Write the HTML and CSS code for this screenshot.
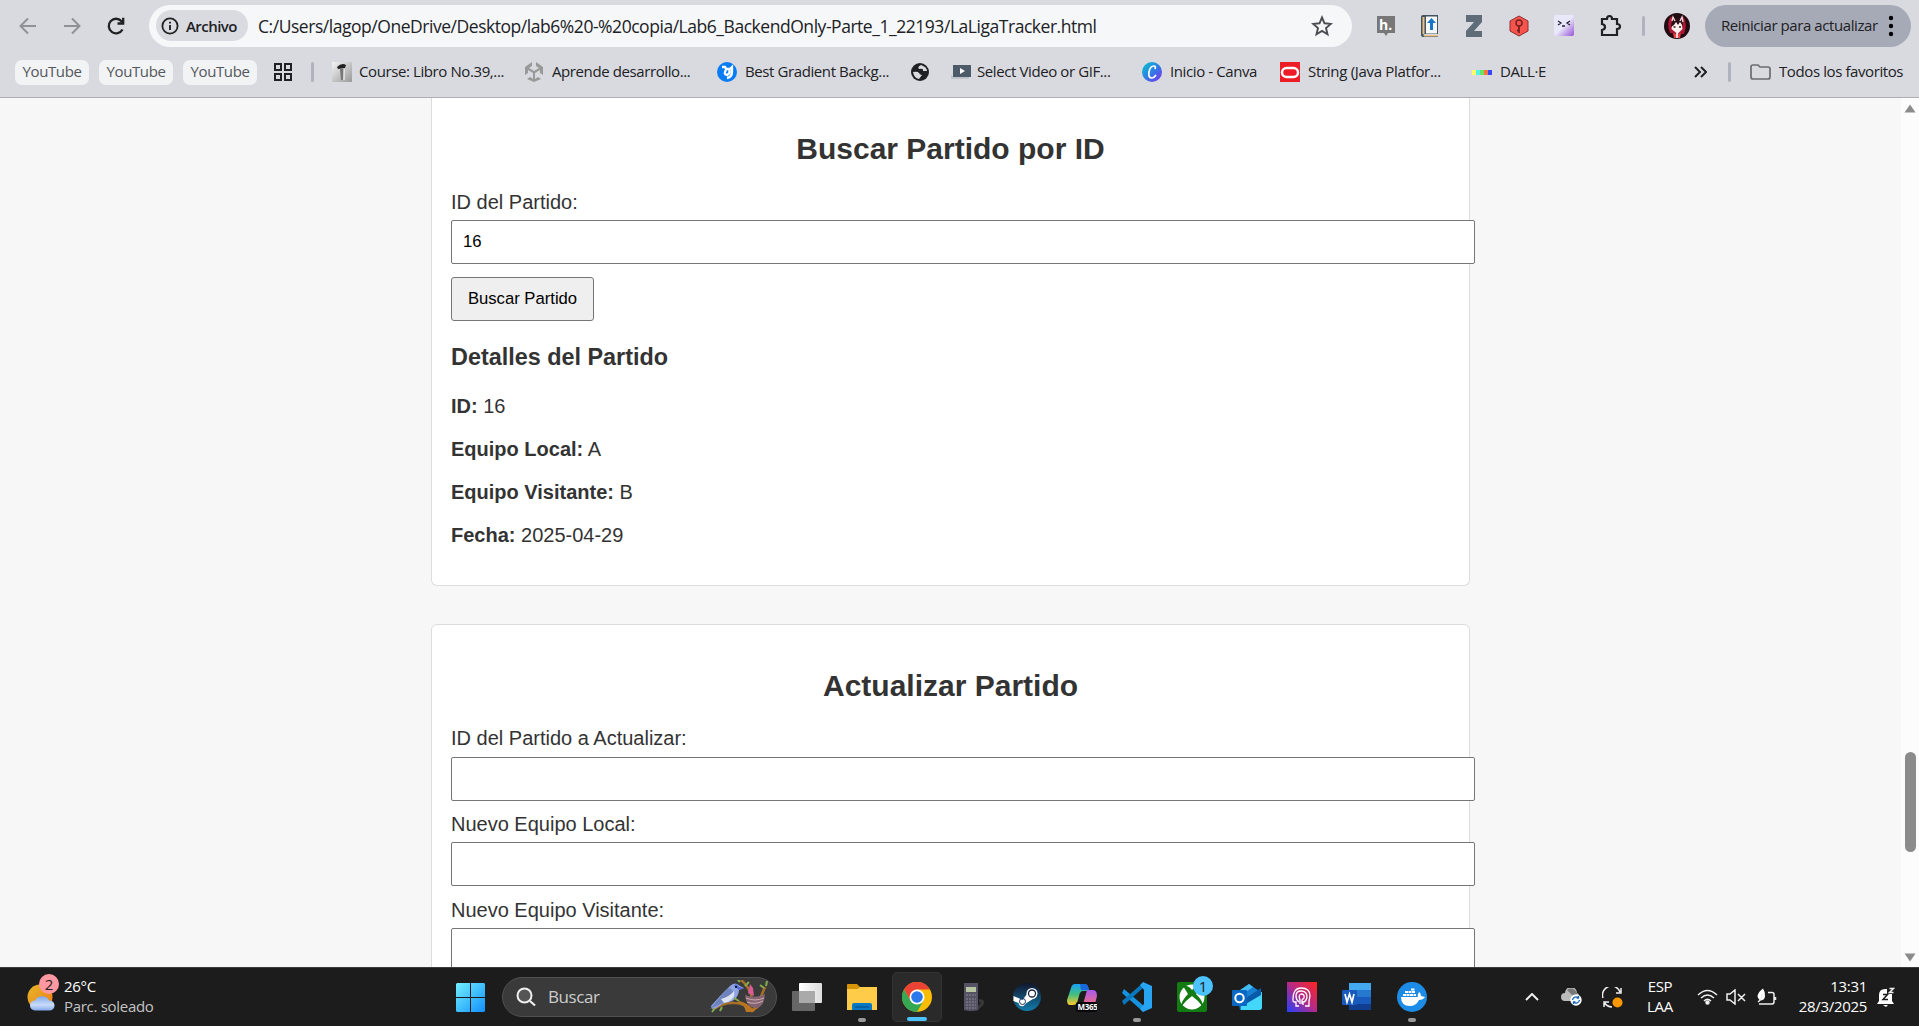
FILE: index.html
```html
<!DOCTYPE html>
<html lang="es">
<head>
<meta charset="utf-8">
<title>LaLigaTracker</title>
<link rel="stylesheet" href="styles.css">
</head>
<body>
<header class="browser">
  <div class="toolbar">
    <svg class="nav back" width="24" height="24" viewBox="0 0 24 24"><path d="M20 12H5M12 4.500L4.500 12l7.500 7.500"/></svg>
    <svg class="nav fwd" width="24" height="24" viewBox="0 0 24 24"><path d="M4 12h15M12 4.500L19.500 12 12 19.500"/></svg>
    <svg class="nav reload" width="24" height="24" viewBox="0 0 24 24"><path d="M18.500 15.500A7.300 7.300 0 1 1 17.800 7.500L19 9M19.200 3.800V9.500H13.500"/></svg>
    <div class="omnibox">
      <div class="chip">
        <svg width="18" height="18" viewBox="0 0 18 18"><circle cx="9" cy="9" r="7.600" fill="none" stroke="#222" stroke-width="1.800"/><path d="M9 8v5M9 4.700v1.900" stroke="#222" stroke-width="1.900"/></svg>
        <span class="chip-text">Archivo</span>
      </div>
      <span class="url">C:/Users/lagop/OneDrive/Desktop/lab6%20-%20copia/Lab6_BackendOnly-Parte_1_22193/LaLigaTracker.html</span>
      <svg class="star" width="22" height="22" viewBox="0 0 22 22"><path d="M11 2.500l2.500 5.800 6.300.6-4.800 4.100 1.500 6.200L11 15.900l-5.500 3.300L7 13 2.200 8.900l6.300-.6z" fill="none" stroke="#4a4d51" stroke-width="1.900"/></svg>
    </div>
    <div class="extensions">
      <svg width="20" height="20" viewBox="0 0 20 20"><path d="M1 0h18v17h-7l-2 3-2-3H1z" fill="#777"/><text x="3" y="14" class="h-letter">h.</text></svg>
      <svg width="20" height="22" viewBox="0 0 20 22"><path d="M1 2q0-2 2-2h15v19H5q-2 0-2 1.500H18V22H3q-2 0-2-2z" fill="#44535d"/><path d="M2.500 2h2v17h-2z" fill="#e9c384"/><path d="M6 1.500h11v17H6z" fill="#f5f7f8"/><path d="M4 20h14v1.500H4z" fill="#e9c384"/><path d="M11.500 3L16 8h-3v7h-3V8H7z" fill="#1675c9"/></svg>
      <svg width="20" height="22" viewBox="0 0 20 22"><path d="M2 0h16v7l-8 9h8v6H2v-6l8-9H2z" fill="#5e6d78"/></svg>
      <svg width="22" height="22" viewBox="0 0 22 22"><path d="M11 1l9 5v10l-9 5-9-5V6z" fill="#f7544e" stroke="#8e2e2d"/><circle cx="11" cy="8" r="3" fill="none" stroke="#722" stroke-width="1.500"/><path d="M11 11v7m0-2.500h-2" stroke="#722" stroke-width="1.800"/></svg>
      <svg width="20" height="21" viewBox="0 0 20 21"><defs><linearGradient id="face" x1="0" y1="0" x2="1" y2="1"><stop offset=".5" stop-color="#e9e8fa"/><stop offset="1" stop-color="#9651d6"/></linearGradient></defs><rect width="20" height="21" rx="2" fill="url(#face)"/><path d="M4 6l3 2-3 2m12-4l-3 2 3 2M8 11h3" fill="none" stroke="#223" stroke-width="1.300"/></svg>
      <svg width="24" height="24" viewBox="0 0 24 24"><path d="M4 5h5q0-3 2.500-3T14 5h5v5q3 0 3 2.500T19 15v6H4v-5q3-.5 3-3T4 10z" fill="none" stroke="#202124" stroke-width="2.200"/></svg>
    </div>
    <i class="bar-rule"></i>
    <svg class="avatar" width="26" height="26" viewBox="0 0 26 26"><circle cx="13" cy="13" r="13" fill="#210c13"/><path d="M6 20Q2 10 7 3l2 5h8l2-5q5 8 1 18z" fill="#b01734"/><path d="M8.500 9h9l1 7-5 5-6-5z" fill="#fff0ed"/><path d="M7 14Q7 5 13 5t6 8l-3-4-2 3-2-3-2 3z" fill="#2b1018"/><path d="M8 8l1-4 2 4m5 0l2-4 1 5" stroke="#f4d9dd" stroke-width="1.300" fill="none"/><path d="M9.500 14h2m3.500 0h2" stroke="#391820" stroke-width="1.500"/><path d="M9 20l4 1 4-1-1 5h-6z" fill="#ee4344"/><path d="M13 20v5" stroke="#fff" stroke-width="1.500"/></svg>
    <div class="update"><span class="update-text">Reiniciar para actualizar</span><svg width="6" height="22" viewBox="0 0 6 22"><circle cx="3" cy="3" r="2.200"/><circle cx="3" cy="11" r="2.200"/><circle cx="3" cy="19" r="2.200"/></svg></div>
  </div>
  <nav class="bookmarks">
    <span class="yt">YouTube</span><span class="yt">YouTube</span><span class="yt">YouTube</span>
    <svg class="grid" width="18" height="18" viewBox="0 0 18 18"><path d="M1 1h6v6H1zM11 1h6v6h-6zM1 11h6v6H1zM11 11h6v6h-6z" fill="none" stroke="#202124" stroke-width="2"/></svg>
    <i class="bar-rule bm-rule"></i>
    <a class="bm b1"><svg width="20" height="20" viewBox="0 0 20 20"><defs><linearGradient id="book" x2="1" y2="1"><stop stop-color="#f4f4f4"/><stop offset="1" stop-color="#999"/></linearGradient></defs><path d="M0 0h20v20H0z" fill="url(#book)"/><path d="M5 5q5-5 9-2l-1 3-7 1z" fill="#222"/><path d="M8 7h4l-1 11H9z" fill="#777"/><path d="M12 7v11" stroke="#fff"/></svg><span>Course: Libro No.39,...</span></a>
    <a class="bm b2"><svg width="20" height="20" viewBox="0 0 20 20"><path d="M8 0v4L5 6l5 3 5-3-3-2V0l7 5v8l-3-2V8l-5 3v6l3-2 3 2-7 3-7-3 3-2 3 2v-6L4 8v3l-3 2V5z" fill="#999"/></svg><span>Aprende desarrollo...</span></a>
    <a class="bm b3"><svg width="20" height="20" viewBox="0 0 20 20"><circle cx="10" cy="10" r="10" fill="#087cf5"/><path d="M5 5h3l1 2h4l2-2v5q0 5-5 6m-1-8q-3 4 1 5 4-2 2-5" fill="none" stroke="#fff" stroke-width="2.300"/></svg><span>Best Gradient Backg...</span></a>
    <a class="bm b4"><svg width="18" height="18" viewBox="0 0 18 18"><circle cx="9" cy="9" r="9" fill="#202124"/><path d="M2 9q5-1 6 1t3 2l-3 4q-5-1-6-7m8-7q-4 2-2 4 5-1 4 2l4 0Q16 4 10 2" fill="#dadbe0"/></svg></a>
    <a class="bm b5"><svg width="20" height="16" viewBox="0 0 20 16"><path d="M0 11l3 2h15v2H0z" fill="#c0c3c9"/><rect x="2" y="1" width="18" height="12" fill="#4c5b67"/><path d="M9 4l5 3-5 3z" fill="#fff"/></svg><span>Select Video or GIF...</span></a>
    <a class="bm b6"><svg width="20" height="20" viewBox="0 0 20 20"><defs><linearGradient id="canva" x2="1" y2="1"><stop stop-color="#00c9c8"/><stop offset=".55" stop-color="#3577e8"/><stop offset="1" stop-color="#842be8"/></linearGradient></defs><circle cx="10" cy="10" r="10" fill="url(#canva)"/><path d="M13 7q1-3-1-3-4 0-5 6-1 6 3 6 2 0 4-3" fill="none" stroke="#fff" stroke-width="1.700"/></svg><span>Inicio - Canva</span></a>
    <a class="bm b7"><svg width="20" height="20" viewBox="0 0 20 20"><path d="M0 0h20v20H0z" fill="#ee1c24"/><rect x="2" y="6" width="16" height="9" rx="4.500" fill="none" stroke="#fff" stroke-width="2.500"/></svg><span>String (Java Platfor...</span></a>
    <a class="bm b8"><svg width="20" height="5" viewBox="0 0 20 5"><path d="M0 0h4v5H0z" fill="#fffb6a"/><path d="M4 0h4v5H4z" fill="#51f3e8"/><path d="M8 0h4v5H8z" fill="#6be35c"/><path d="M12 0h4v5h-4z" fill="#f27542"/><path d="M16 0h4v5h-4z" fill="#3646ff"/></svg><span>DALL·E</span></a>
    <svg class="more" width="13" height="12" viewBox="0 0 13 12"><path d="M1 1l5 5-5 5M7 1l5 5-5 5" fill="none" stroke="#202124" stroke-width="2"/></svg>
    <i class="bar-rule fav-rule"></i>
    <a class="bm b9"><svg width="21" height="16" viewBox="0 0 21 16"><path d="M1 3q0-2 2-2h5l2 2h8q2 0 2 2v8q0 2-2 2H3q-2 0-2-2z" fill="none" stroke="#6b6c70" stroke-width="1.700"/></svg><span>Todos los favoritos</span></a>
  </nav>
</header>
<main class="viewport">
  <div class="page">
    <section class="card first">
      <h2>Buscar Partido por ID</h2>
      <label>ID del Partido:</label>
      <input value="16">
      <button>Buscar Partido</button>
      <h3>Detalles del Partido</h3>
      <p><strong>ID:</strong> 16</p>
      <p><strong>Equipo Local:</strong> A</p>
      <p><strong>Equipo Visitante:</strong> B</p>
      <p><strong>Fecha:</strong> 2025-04-29</p>
    </section>
    <section class="card second">
      <h2>Actualizar Partido</h2>
      <label>ID del Partido a Actualizar:</label><input>
      <label>Nuevo Equipo Local:</label><input>
      <label>Nuevo Equipo Visitante:</label><input>
    </section>
  </div>
  <aside class="scroll"><svg width="12" height="9" viewBox="0 0 12 9"><path d="M6 0.500l5.500 8H.5z"/></svg><i class="thumb"></i><svg class="down" width="12" height="9" viewBox="0 0 12 9"><path d="M6 8.500L.5.500h11z"/></svg></aside>
</main>
<footer class="taskbar">
  <div class="weather">
    <svg width="32" height="38" viewBox="0 0 32 38"><defs><linearGradient id="sun" y2="1" x2="1"><stop stop-color="#e5b927"/><stop offset="1" stop-color="#f27819"/></linearGradient><linearGradient id="cloud" x2="0" y2="1"><stop stop-color="#82a8e9"/><stop offset=".6" stop-color="#c9dcfa"/><stop offset="1" stop-color="#86a9eb"/></linearGradient></defs><circle cx="13" cy="23" r="12.500" fill="url(#sun)"/><path d="M8 36.500a5 5 0 0 1 0-10 8 8 0 0 1 14 0 5 5 0 0 1 1 10z" fill="url(#cloud)"/><circle cx="22" cy="10" r="10" fill="#ff98a0"/><text x="22" y="15.500" text-anchor="middle" class="badge-text">2</text></svg>
    <div class="weather-text"><span>26°C</span><span class="muted">Parc. soleado</span></div>
  </div>
  <svg class="start" width="29" height="29" viewBox="0 0 29 29"><defs><linearGradient id="win" x2="1" y2="1"><stop stop-color="#72efff"/><stop offset="1" stop-color="#1290fb"/></linearGradient></defs><path d="M1 0h13v14H0V1zM15 0h13l1 1v13H15zM0 15h14v14H1l-1-1zM15 15h14v13l-1 1H15z" fill="url(#win)"/></svg>
  <div class="search">
    <svg width="20" height="20" viewBox="0 0 20 20"><circle cx="8.500" cy="8.500" r="7" fill="#555" stroke="#eee" stroke-width="2"/><path d="M14 14l5 4.500" stroke="#eee" stroke-width="2.200"/></svg>
    <span>Buscar</span>
    <svg class="bird" width="60" height="34" viewBox="0 0 60 34"><path d="M4 29q10-7 21-6 10 0 17 8 6-6 13-24M48 28q-5-5-6-10Q39 6 31 0" fill="none" stroke="#a66f28" stroke-width="2.500"/><path d="M27 23q7 0 9 9h7l7-6-7 3q-7-7-14-8" fill="#b87522"/><path d="M1 26l10-11L20 6q5-5 10 0l4 2-5 2q-1 12-15 13L3 30z" fill="#8fa5e3"/><path d="M20 8q-5 1-9 8L0 29l17-8q7-4 6-10" fill="#6f83bd"/><path d="M11 19q8-2 13-8 2 9-10 12z" fill="#dce3f2"/><path d="M24 6q2-4 5 1l5 1-5 2z" fill="#5668d8"/><circle cx="26" cy="7" r="1"/><path d="M35 15q10 4 20-1-1 14-10 14-9-1-10-13" fill="#846473"/><path d="M36 18q9 4 18 0m-17 4q8 3 16-1" fill="none" stroke="#cfadae"/><path d="M38 13l2-9 3 4 1 8z" fill="#db5a93"/><path d="M30 2l-2-2m7 6l4-4m15 6l-4-3m6 1l1-5M5 28l-3 4m10-5l-2 4m19-10l-5-3" stroke="#83ad4c" stroke-width="2"/></svg>
  </div>
  <div class="apps">
    <div class="app"><svg width="30" height="30" viewBox="0 0 30 30"><defs><linearGradient id="glass"><stop stop-color="#fff"/><stop offset="1" stop-color="#ddd"/></linearGradient></defs><rect x="7" y="1" width="23" height="20" rx="1" fill="url(#glass)"/><rect y="9" width="23" height="20" rx="1" fill="#666"/><path d="M7 9h16v12H7z" fill="#aaa"/></svg></div>
    <div class="app"><svg width="30" height="30" viewBox="0 0 30 30"><path d="M0 3q0-1 1-1h9l3 3h16v8H0z" fill="#d89409"/><path d="M0 7h11l2-2h17v23H0z" fill="#ffcc4a"/><path d="M5 28v-5q0-2 2-2h16q2 0 2 2v5z" fill="#0878c4"/><path d="M8 25h14" stroke="#034a80"/></svg><i class="dot"></i></div>
    <div class="app active"><svg width="30" height="30" viewBox="0 0 30 30"><circle cx="15" cy="15" r="15" fill="#fbbc05"/><path d="M2 7.500A15 15 0 0 1 28 7.500H15L8.500 19z" fill="#ea4335"/><path d="M2 7.500l6.500 11.300 6.500 3.700 6.500-3.800L15 30A15 15 0 0 1 2 7.500z" fill="#34a853"/><circle cx="15" cy="15" r="7.500" fill="#fff"/><circle cx="15" cy="15" r="5.800" fill="#2878ec"/></svg><i class="line"></i></div>
    <div class="app"><svg width="30" height="30" viewBox="0 0 30 30"><path d="M22 19q5-1 3 3l-6 6" fill="none" stroke="#393939" stroke-width="3"/><path d="M7 1h14v27q-7 2-14 0z" fill="#555363"/><path d="M9 5h10v5H9z" fill="#b8c5a2"/><path d="M9 13h10m-10 4h10m-10 3h10m-10 3h10m-10 3h10" stroke="#8c879b" stroke-dasharray="2 1"/></svg></div>
    <div class="app"><svg width="30" height="30" viewBox="0 0 30 30"><defs><linearGradient id="steam" x2="0" y2="1"><stop stop-color="#11162c"/><stop offset="1" stop-color="#137cac"/></linearGradient></defs><circle cx="15" cy="15" r="14" fill="url(#steam)"/><path d="M1.500 14l9 4 6-8 6 6-8 5-3 3q-4 1-5-3l-5-2z" fill="#fff"/><circle cx="20" cy="11.500" r="5.500" fill="#fff"/><circle cx="20" cy="11.500" r="3.500" fill="#fff" stroke="#17243d" stroke-width="1.300"/><circle cx="10.500" cy="19.500" r="3" fill="none" stroke="#17345d" stroke-width="1"/></svg></div>
    <div class="app"><svg width="30" height="30" viewBox="0 0 30 30"><defs><linearGradient id="cop" x2="0" y2="1"><stop stop-color="#15a2f7"/><stop offset=".5" stop-color="#44be7e"/><stop offset="1" stop-color="#ffc928"/></linearGradient><linearGradient id="pil" x2="0" y2="1"><stop stop-color="#a85aef"/><stop offset="1" stop-color="#ff716b"/></linearGradient></defs><path d="M8 2h10q3 0 4 7h-6q-3 0-4 5l-2 7q-1 2-4 2H3q-3 0-3-5L4 6q1-4 4-4z" fill="url(#cop)"/><path d="M13 2h5q3 0 4 6h-8z" fill="#1867db"/><path d="M20 8h6q4 0 4 6l-3 12H14q2 0 3-7z" fill="url(#pil)"/><rect x="9" y="20" width="21" height="10" rx="2" fill="#050505"/><text x="10.500" y="28" class="m365">M365</text></svg></div>
    <div class="app"><svg width="30" height="30" viewBox="0 0 30 30"><path d="M2 7l20 17-.5 6L0 11z" fill="#1693df"/><path d="M2 23L22 5V0L0 19z" fill="#0877bc"/><path d="M21 0l9 4v22l-9 4-3-3 4-5V8l-4-5z" fill="#27a4f2"/></svg><i class="dot"></i></div>
    <div class="app"><svg class="badged" width="36" height="36" viewBox="0 0 36 36"><rect x="0" y="6" width="30" height="30" rx="2" fill="#127b12"/><circle cx="15" cy="21" r="12.500" fill="#fff"/><path d="M6 10q5-1 9 4 5-5 9-4l-5 8q8 8 7 13-4-6-11-11Q8 25 4 31q0-6 7-13z" fill="#127b12"/><circle cx="26" cy="10" r="10" fill="#4cc2ff"/><text x="26" y="15.500" text-anchor="middle" class="badge-text">1</text></svg></div>
    <div class="app"><svg width="30" height="30" viewBox="0 0 30 30"><path d="M5 11L17 2l13 9v14q0 3-3 3H8z" fill="#1680d2"/><path d="M8 8l9-6 4 3-13 9z" fill="#45bbf4"/><path d="M9 21l12-9 9-2v15q0 3-3 3H9z" fill="#43d7fa"/><path d="M11 18L29 6v7l-17 10z" fill="#075ba9"/><rect y="8" width="15" height="16" rx="1" fill="#0868c3"/><circle cx="7.500" cy="16" r="4.200" fill="none" stroke="#fff" stroke-width="2"/></svg></div>
    <div class="app"><svg width="30" height="30" viewBox="0 0 30 30"><defs><linearGradient id="head" x1="0" y1="1" x2="1" y2="0"><stop stop-color="#2341ff"/><stop offset=".5" stop-color="#b52a88"/><stop offset="1" stop-color="#ff251d"/></linearGradient></defs><path d="M0 0h30v30H0z" fill="url(#head)"/><path d="M12 24H9v-4H7q-1 0-1-2 0-12 8-12 9 0 9 8l-1 5v5h-4M12 20q-3-2-3-6 0-5 5-5 6 0 6 6-1 5-4 5v3m-3-1v-4q-2-5 1-6 4 0 3 4l-2 2v4" fill="none" stroke="#fff" stroke-width="1.300"/></svg></div>
    <div class="app"><svg width="30" height="30" viewBox="0 0 30 30"><path d="M7 1h22v7H7z" fill="#43a8ed"/><path d="M7 8h22v7H7z" fill="#2579cf"/><path d="M7 15h22v7H7z" fill="#195bbd"/><path d="M7 22h22v6H7z" fill="#123e91"/><rect y="8" width="15" height="15" rx="1" fill="#1759bd"/><path d="M3 12l2 8 2.500-8 2.500 8 2-8" fill="none" stroke="#fff" stroke-width="1.700"/></svg></div>
    <div class="app"><svg width="30" height="30" viewBox="0 0 30 30"><circle cx="15" cy="15" r="15" fill="#1d8ce7"/><path d="M4 15h17q-1-2 1-5 2 1 2 4l4 1q-2 3-6 3-3 6-9 6-9 0-9-9z" fill="#fff"/><path d="M6 13h13M8 10h10M14 7.500h4" stroke="#fff" stroke-width="2.200" stroke-dasharray="3 .5"/></svg><i class="dot"></i></div>
  </div>
  <div class="tray">
    <svg class="chev" width="14" height="8" viewBox="0 0 14 8"><path d="M1 7l6-6 6 6"/></svg>
    <svg class="onedrive" width="21" height="18" viewBox="0 0 21 18"><path d="M4 13a4 4 0 0 1 0-8 6 6 0 0 1 12 0q3 1 2 8z" fill="#bbb"/><path d="M6 2q6-4 10 3l1 4-6-2z" fill="#777"/><circle cx="15" cy="12" r="5.700" fill="#fff"/><path d="M11.500 12a3.500 3.500 0 0 1 6-2m1 2a3.500 3.500 0 0 1-6 2m5-6v2h-2m-3 6v-2h2" fill="none" stroke="#1468bd" stroke-width="1.300"/></svg>
    <svg class="sync" width="21" height="21" viewBox="0 0 21 21"><path d="M1 11A9 9 0 0 1 18 5m1-4v5h-5M2 20v-5h5m-5 0q3 5 8 5"/><circle cx="15.500" cy="15.500" r="5" fill="#ff9800" stroke="none"/></svg>
    <div class="lang"><span>ESP</span><span>LAA</span></div>
    <svg class="wifi" width="21" height="16" viewBox="0 0 21 16"><path d="M1 6q9.500-9 19 0M4 9q6.500-6 13 0M7 12q3.500-3.500 7 0"/><circle cx="10.500" cy="13.500" r="1.500" fill="#fff"/></svg>
    <svg class="vol" width="20" height="16" viewBox="0 0 20 16"><path d="M1 5h3l5-4v14l-5-4H1zM12 5l7 7m0-7l-7 7"/></svg>
    <svg class="bat" width="21" height="18" viewBox="0 0 21 18"><path d="M12 4.500h4q2 0 2 2v7q0 2.500-2 2.500H3M19.500 9v3"/><path d="M7 .5q2 3 2 7 0 5-5 5-6-5 3-12z" fill="#fff" stroke="none"/><path d="M6 6q0 5-4 8"/></svg>
    <div class="clock"><span>13:31</span><span>28/3/2025</span></div>
    <svg class="bell" width="18" height="20" viewBox="0 0 18 20"><path d="M0 17l2-3V8q0-7 8-6v5h5v7l2 3zM6 18h5l-2 2z" fill="#fff" stroke="none"/><path d="M6 7.500h4.500l-4.500 5h5" stroke="#1c1c1c"/><path d="M12.500 1.500h4l-4 4h4"/></svg>
  </div>
</footer>
</body>
</html>
```
FILE: styles.css
```css
* { box-sizing: border-box; }
body { margin: 0; width: 1919px; height: 1026px; overflow: hidden; display: flex; flex-direction: column; font-family: "Open Sans", "Noto Sans", sans-serif; color: #202124; background: #f7f7f7; }
svg { flex: none; display: block; }
span { white-space: nowrap; }
.browser { height: 98px; background: #d9dadf; border-bottom: 1px solid #adaeb3; flex: none; }
.toolbar { height: 51px; display: flex; align-items: center; padding-left: 16px; }
.nav { fill: none; stroke: #909196; stroke-width: 2; margin-right: 20px; }
.nav.reload { stroke: #202124; stroke-width: 2.300; margin-right: 21px; }
.omnibox { width: 1203px; height: 42px; border-radius: 21px; background: #f5f7f9; display: flex; align-items: center; padding-left: 7px; flex: none; }
.chip { width: 92px; height: 31px; border-radius: 16px; background: #dadbe0; display: flex; align-items: center; padding-left: 5px; gap: 7px; font-size: 15px; font-weight: 600; }
.chip-text { letter-spacing: -.55px; }
.url { font-size: 17.500px; letter-spacing: -.46px; margin-left: 10px; width: 1053px; }
.extensions { display: flex; align-items: center; justify-content: space-between; width: 246px; margin-left: 24px; flex: none; }
.h-letter { font: bold 14px "Open Sans", sans-serif; fill: #fff; }
.bar-rule { width: 3px; height: 20px; background: #b0b3bd; border-radius: 2px; flex: none; }
.toolbar .bar-rule { margin-left: 20px; }
.avatar { margin-left: 19px; }
.update { width: 206px; height: 42px; border-radius: 21px; background: #a6aab6; margin-left: 15px; display: flex; align-items: center; padding-left: 16px; gap: 11px; flex: none; font-size: 15px; letter-spacing: -.42px; }
.update-text { width: 156px; margin-top: -2px; }
.bookmarks { height: 42px; display: flex; align-items: center; padding-left: 15px; font-size: 15px; letter-spacing: -.4px; }
.yt { width: 74px; height: 25px; border-radius: 7px; background: #f1f3f5; text-align: center; line-height: 23px; color: #54575b; margin-right: 10px; flex: none; }
.grid { margin-left: 7px; }
.bm-rule { margin: 0 18px 0 19px; }
.bm { display: flex; align-items: center; gap: 8px; flex: none; }
.bm span { margin-top: -2px; }
.b1 { width: 192px; gap: 7px; } .b2 { width: 193px; } .b3 { width: 194px; } .b4 { width: 40px; } .b5 { width: 191px; gap: 6px; } .b6 { width: 138px; } .b7 { width: 192px; } .b8 { width: 222px; }
.bm.b7 { letter-spacing: -.3px; }
.fav-rule { margin: 0 19px 0 21px; }
.viewport { height: 869px; flex: none; background: #f7f7f7; overflow: hidden; display: flex; justify-content: flex-end; font-family: "Liberation Sans", Arial, sans-serif; color: #333; }
.page { width: 1470px; display: flex; flex-direction: column; gap: 38px; }
.card { width: 1039px; background: #fff; border: 1px solid #ddd; border-radius: 6px; padding: 0 19px; flex: none; }
.card.first { height: 488px; border-top: 0; border-radius: 0 0 6px 6px; }
.card.second { height: 500px; }
h2 { margin: 0; font-size: 30px; line-height: 34px; text-align: center; }
.first h2 { padding-top: 34px; }
.second h2 { padding-top: 44px; }
label { display: block; font-size: 20px; line-height: 23px; }
.first label { margin-top: 25px; }
.second label { margin-top: 12px; }
.second h2 + label { margin-top: 24px; }
.second label:last-of-type { margin-top: 13px; }
input { display: block; width: 1024px; height: 44px; margin-top: 6px; border: 1px solid #767676; border-radius: 2px; padding: 0 11px; font: 16.667px "Liberation Sans", Arial, sans-serif; color: #000; background: #fff; }
.second h2 + label + input { margin-top: 7px; }
button { display: block; width: 143px; height: 44px; margin: 13px 0 0; border: 1px solid #767676; border-radius: 3px; background: #efefef; font: 16.667px "Liberation Sans", Arial, sans-serif; padding: 0; color: #000; }
h3 { font-size: 23.400px; line-height: 27px; margin: 23px 0 24px; }
p { font-size: 20px; line-height: 23px; margin: 0 0 20px; }
.scroll { width: 18px; background: #fcfcfc; display: flex; flex-direction: column; align-items: center; padding: 6px 0 5px; }
.scroll svg { fill: #8b8b8b; }
.thumb { width: 11px; height: 100px; border-radius: 6px; background: #8b8b8b; margin-top: 639px; }
.down { margin-top: auto; }
.taskbar { height: 59px; background: #1c1c1c; border-top: 1px solid #3b3b3b; display: flex; align-items: center; color: #fff; flex: none; font-size: 15px; letter-spacing: -.3px; }
.weather { display: flex; width: 456px; padding-left: 27px; gap: 5px; align-items: center; flex: none; }
.weather svg { margin-top: -8px; }
.weather-text, .lang, .clock { display: flex; flex-direction: column; line-height: 20px; margin-top: -2px; }
.muted { color: #c4c4c4; }
.badge-text { font: 15px "Open Sans", sans-serif; fill: #202020; }
.m365 { font: bold 8px "Open Sans", sans-serif; fill: #fff; }
.search { width: 275px; height: 40px; border-radius: 20px; background: #3a3a3a; border: 1px solid #505050; margin-left: 17px; display: flex; align-items: center; padding-left: 13px; gap: 12px; font-size: 17px; color: #ccc; flex: none; }
.search span { width: 150px; margin-top: -1px; letter-spacing: -.4px; }
.apps { display: flex; gap: 5px; margin-left: 5px; height: 50px; flex: none; }
.app { width: 50px; height: 50px; display: flex; align-items: center; justify-content: center; position: relative; border-radius: 5px; }
.app.active { background: #2a2a2a; border: 1px solid #333; }
.badged { margin: -6px -6px 0 0; }
.dot, .line { position: absolute; bottom: 0; width: 8px; height: 4px; border-radius: 2px; background: #999; }
.line { width: 20px; background: #4cc2ff; }
.tray { display: flex; align-items: center; margin-left: auto; padding-right: 24px; flex: none; }
.tray svg { fill: none; stroke: #eee; stroke-width: 1.500; }
.tray svg.chev { stroke-width: 2; margin-right: 22px; }
.tray .onedrive { stroke: none; margin-right: 20px; }
.sync { margin-right: 23px; }
.lang { width: 28px; align-items: center; margin-right: 23px; }
.wifi { margin-right: 8px; } .vol { margin-right: 10px; } .bat { margin-right: 20px; }
.clock { width: 70px; align-items: flex-end; }
.bell { margin-left: 10px; }
```
